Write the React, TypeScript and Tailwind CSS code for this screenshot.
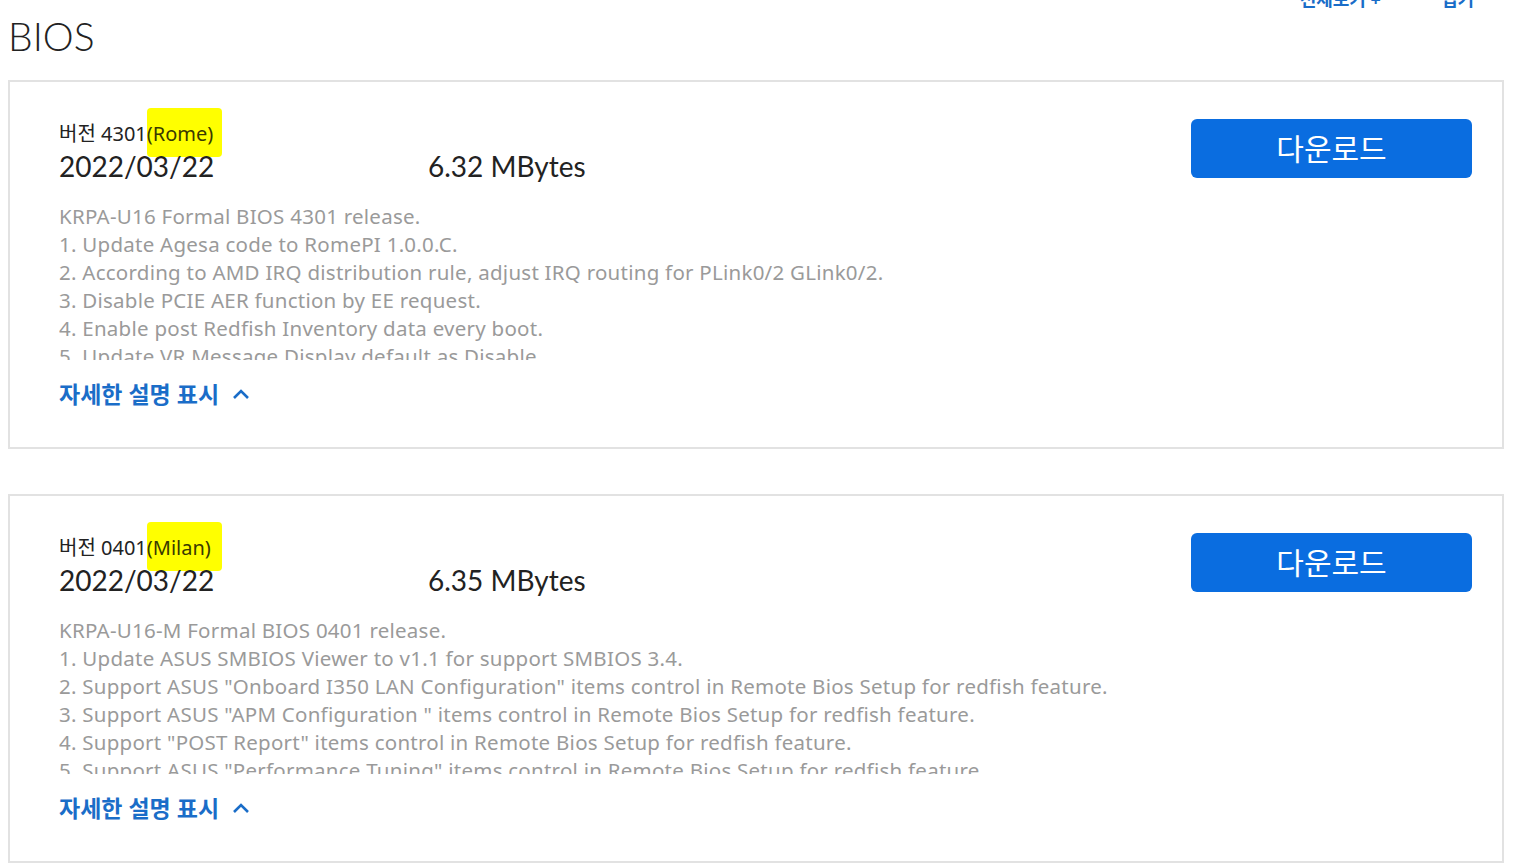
import React from "react";

const font = { fontFamily: "'Noto Sans', 'Noto Sans CJK KR', sans-serif" };
const lato = { fontFamily: "Lato, 'Noto Sans CJK KR', sans-serif" };

type Item = {
  version: string;
  tag: string;
  date: string;
  size: string;
  lines: string[];
};

const items: Item[] = [
  {
    version: "버전 4301",
    tag: "(Rome)",
    date: "2022/03/22",
    size: "6.32 MBytes",
    lines: [
      "KRPA-U16 Formal BIOS 4301 release.",
      "1. Update Agesa code to RomePI 1.0.0.C.",
      "2. According to AMD IRQ distribution rule, adjust IRQ routing for PLink0/2 GLink0/2.",
      "3. Disable PCIE AER function by EE request.",
      "4. Enable post Redfish Inventory data every boot.",
      "5. Update VR Message Display default as Disable.",
    ],
  },
  {
    version: "버전 0401",
    tag: "(Milan)",
    date: "2022/03/22",
    size: "6.35 MBytes",
    lines: [
      "KRPA-U16-M Formal BIOS 0401 release.",
      "1. Update ASUS SMBIOS Viewer to v1.1 for support SMBIOS 3.4.",
      '2. Support ASUS "Onboard I350 LAN Configuration" items control in Remote Bios Setup for redfish feature.',
      '3. Support ASUS "APM Configuration " items control in Remote Bios Setup for redfish feature.',
      '4. Support "POST Report" items control in Remote Bios Setup for redfish feature.',
      '5. Support ASUS "Performance Tuning" items control in Remote Bios Setup for redfish feature.',
    ],
  },
];

function Card({ item }: { item: Item }) {
  return (
    <div className="border-2 border-[#e2e2e2] h-[369px] flex justify-between pl-[49px] pr-[30px] pt-[37px]">
      <div className="flex flex-col">
        <div className="relative flex items-center h-[30px] text-[20px] text-[#222] tracking-[0px]">
          <span className="absolute left-[88px] -top-[11px] w-[75px] h-[49px] bg-[#ffff00] rounded-[4px]" />
          <span className="relative">{item.version}</span>
          <span className="relative text-[#3a3a00]">{item.tag}</span>
        </div>
        <div className="relative flex items-center h-[34px] text-[28px] text-[#222] leading-none" style={lato}>
          <span className="w-[369px]">{item.date}</span>
          <span>{item.size}</span>
        </div>
        <div className="mt-[19px] h-[158px] overflow-hidden text-[20.5px] leading-[28px] text-[#9a9a9a] tracking-[0.25px]">
          {item.lines.map((l, i) => (
            <div key={i} className="whitespace-nowrap">
              {l}
            </div>
          ))}
        </div>
        <div className="mt-[20px] h-[28px] flex items-center gap-[13px] text-[23px] font-bold text-[#1a6dc8]">
          <span>자세한 설명 표시</span>
          <svg width="18" height="12" viewBox="0 0 18 12" fill="none">
            <path d="M2 10 L9 3 L16 10" stroke="#1a6dc8" strokeWidth="2.6" />
          </svg>
        </div>
      </div>
      <div>
        <div className="w-[281px] h-[59px] bg-[#0a6de0] rounded-[6px] flex items-center justify-center text-white text-[30px]">
          다운로드
        </div>
      </div>
    </div>
  );
}

export default function App() {
  return (
    <div className="w-[1523px] h-[867px] bg-white overflow-hidden pl-[8px] pr-[19px]" style={font}>
      <div className="relative h-[80px]">
        <div className="absolute right-[30px] -top-[14px] flex gap-[60px] text-[18px] font-bold text-[#1a6dc8]">
          <span>전체보기 +</span>
          <span>접기</span>
        </div>
        <div className="pt-[12px] text-[39px] font-light text-[#222] leading-[48px]" style={lato}>
          BIOS
        </div>
      </div>
      <div className="flex flex-col gap-[45px]">
        {items.map((it, i) => (
          <Card key={i} item={it} />
        ))}
      </div>
    </div>
  );
}
